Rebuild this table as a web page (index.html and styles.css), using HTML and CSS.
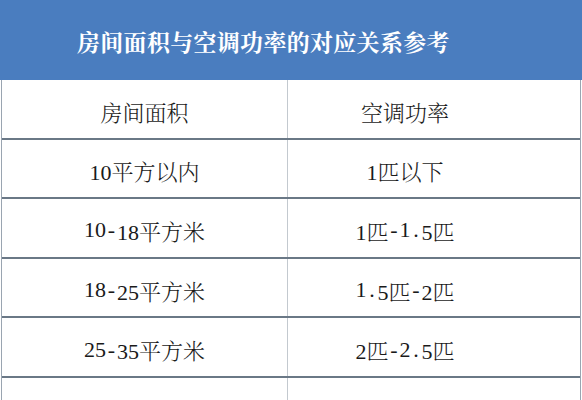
FILE: index.html
```html
<!DOCTYPE html>
<html lang="zh-CN">
<head>
<meta charset="utf-8">
<link rel="stylesheet" href="styles.css">
</head>
<body>
<div class="sheet">
  <div class="title">房间面积与空调功率的对应关系参考</div>
  <div class="table">
    <div class="row"><div class="cell c1">房间面积</div><div class="cell c2">空调功率</div></div>
    <div class="row"><div class="cell c1">10平方以内</div><div class="cell c2">1匹以下</div></div>
    <div class="row"><div class="cell c1">10<span class="h">-</span>18平方米</div><div class="cell c2">1匹<span class="h">-</span>1<span class="h">.</span>5匹</div></div>
    <div class="row"><div class="cell c1">18<span class="h">-</span>25平方米</div><div class="cell c2">1<span class="h">.</span>5匹<span class="h">-</span>2匹</div></div>
    <div class="row"><div class="cell c1">25<span class="h">-</span>35平方米</div><div class="cell c2">2匹<span class="h">-</span>2<span class="h">.</span>5匹</div></div>
    <div class="row"><div class="cell c1">35<span class="h">-</span>45平方米</div><div class="cell c2">2<span class="h">.</span>5匹<span class="h">-</span>3匹</div></div>
  </div>
</div>
</body>
</html>
```
FILE: styles.css
```css
html, body {
  margin: 0;
  padding: 0;
  background: #ffffff;
  overflow: hidden;
}
.sheet {
  width: 582px;
  height: 400px;
  overflow: hidden;
}
.title {
  height: 80px;
  box-sizing: border-box;
  background: #4a7dbf;
  color: #ffffff;
  font-family: "Noto Serif CJK SC", "Noto Sans CJK SC", sans-serif;
  font-weight: 700;
  font-size: 23px;
  letter-spacing: 0.3px;
  display: flex;
  align-items: center;
  padding-left: 77px;
  padding-top: 2px;
}
.table {
  margin-left: 1px;
  width: 580px;
  border-left: 1px solid #9aa5b1;
  border-right: 1px solid #9aa5b1;
  box-sizing: border-box;
}
.row {
  display: grid;
  grid-template-columns: 286px 1fr;
  height: 59.6px;
  box-sizing: border-box;
  border-bottom: 2px solid #6a7886;
}
.cell {
  display: flex;
  align-items: center;
  justify-content: center;
  padding-top: 5px;
  font-family: "Liberation Serif", "Noto Serif CJK SC", "Noto Sans CJK SC", serif;
  font-size: 22px;
  font-weight: 300;
  color: #1a1a1a;
  white-space: nowrap;
}
.h {
  display: inline-block;
  width: 0.5em;
  text-align: center;
}
.c1 {
  border-right: 1px solid #c3c9cf;
}
.c2 {
  padding-right: 58px;
}
```
